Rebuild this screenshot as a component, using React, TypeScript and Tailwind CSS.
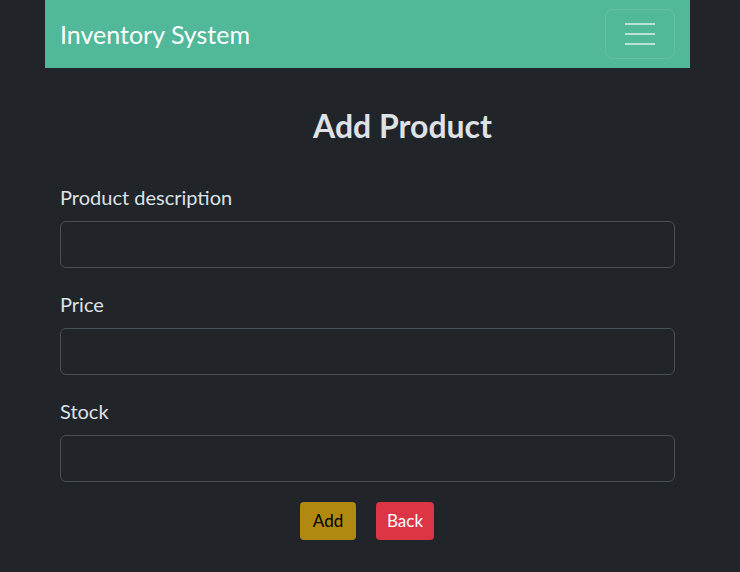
import React, { useState } from 'react';

const Field: React.FC<{ label: string; value: string; onChange: (v: string) => void }> = ({
  label,
  value,
  onChange,
}) => (
  <div className="mb-[19px]">
    <label className="mb-[10px] block pt-[3px] text-[20px] leading-[28px] text-[#dee2e6]">{label}</label>
    <input
      type="text"
      value={value}
      onChange={(e) => onChange(e.target.value)}
      className="block h-[47px] w-full rounded-[6px] border border-[#495057] bg-[#212529] px-3 text-[#dee2e6] outline-none"
    />
  </div>
);

export default function App() {
  const [description, setDescription] = useState('');
  const [price, setPrice] = useState('');
  const [stock, setStock] = useState('');

  return (
    <div
      className="min-h-[572px] bg-[#212529] text-[#dee2e6]"
      style={{ fontFamily: 'Lato, "Open Sans", sans-serif' }}
    >
      {/* Navbar */}
      <nav className="ml-[45px] flex h-[68px] w-[645px] items-center justify-between bg-[#52b89a] pl-[15px] pr-[15px]">
        <span className="text-[25px] leading-none text-white">Inventory System</span>
        <button className="flex h-[50px] w-[70px] flex-col items-center justify-center gap-[8px] rounded-[8px] border border-white/10">
          <span className="h-[2px] w-[30px] bg-white/60" />
          <span className="h-[2px] w-[30px] bg-white/60" />
          <span className="h-[2px] w-[30px] bg-white/60" />
        </button>
      </nav>

      {/* Form */}
      <div className="ml-[60px] w-[615px] pt-[38px]">
        <h1 className="mb-[34px] pl-[253px] text-[32px] font-bold leading-[40px] text-[#dee2e6]">
          Add Product
        </h1>
        <Field label="Product description" value={description} onChange={setDescription} />
        <Field label="Price" value={price} onChange={setPrice} />
        <Field label="Stock" value={stock} onChange={setStock} />
        <div className="mt-[20px] flex justify-center gap-[20px] pr-[1px]">
          <button className="h-[38px] w-[56px] rounded-[4px] bg-[#b08a10] text-[17px] text-black">Add</button>
          <button className="h-[38px] w-[58px] rounded-[4px] bg-[#dc3545] text-[17px] text-white">Back</button>
        </div>
      </div>
    </div>
  );
}
